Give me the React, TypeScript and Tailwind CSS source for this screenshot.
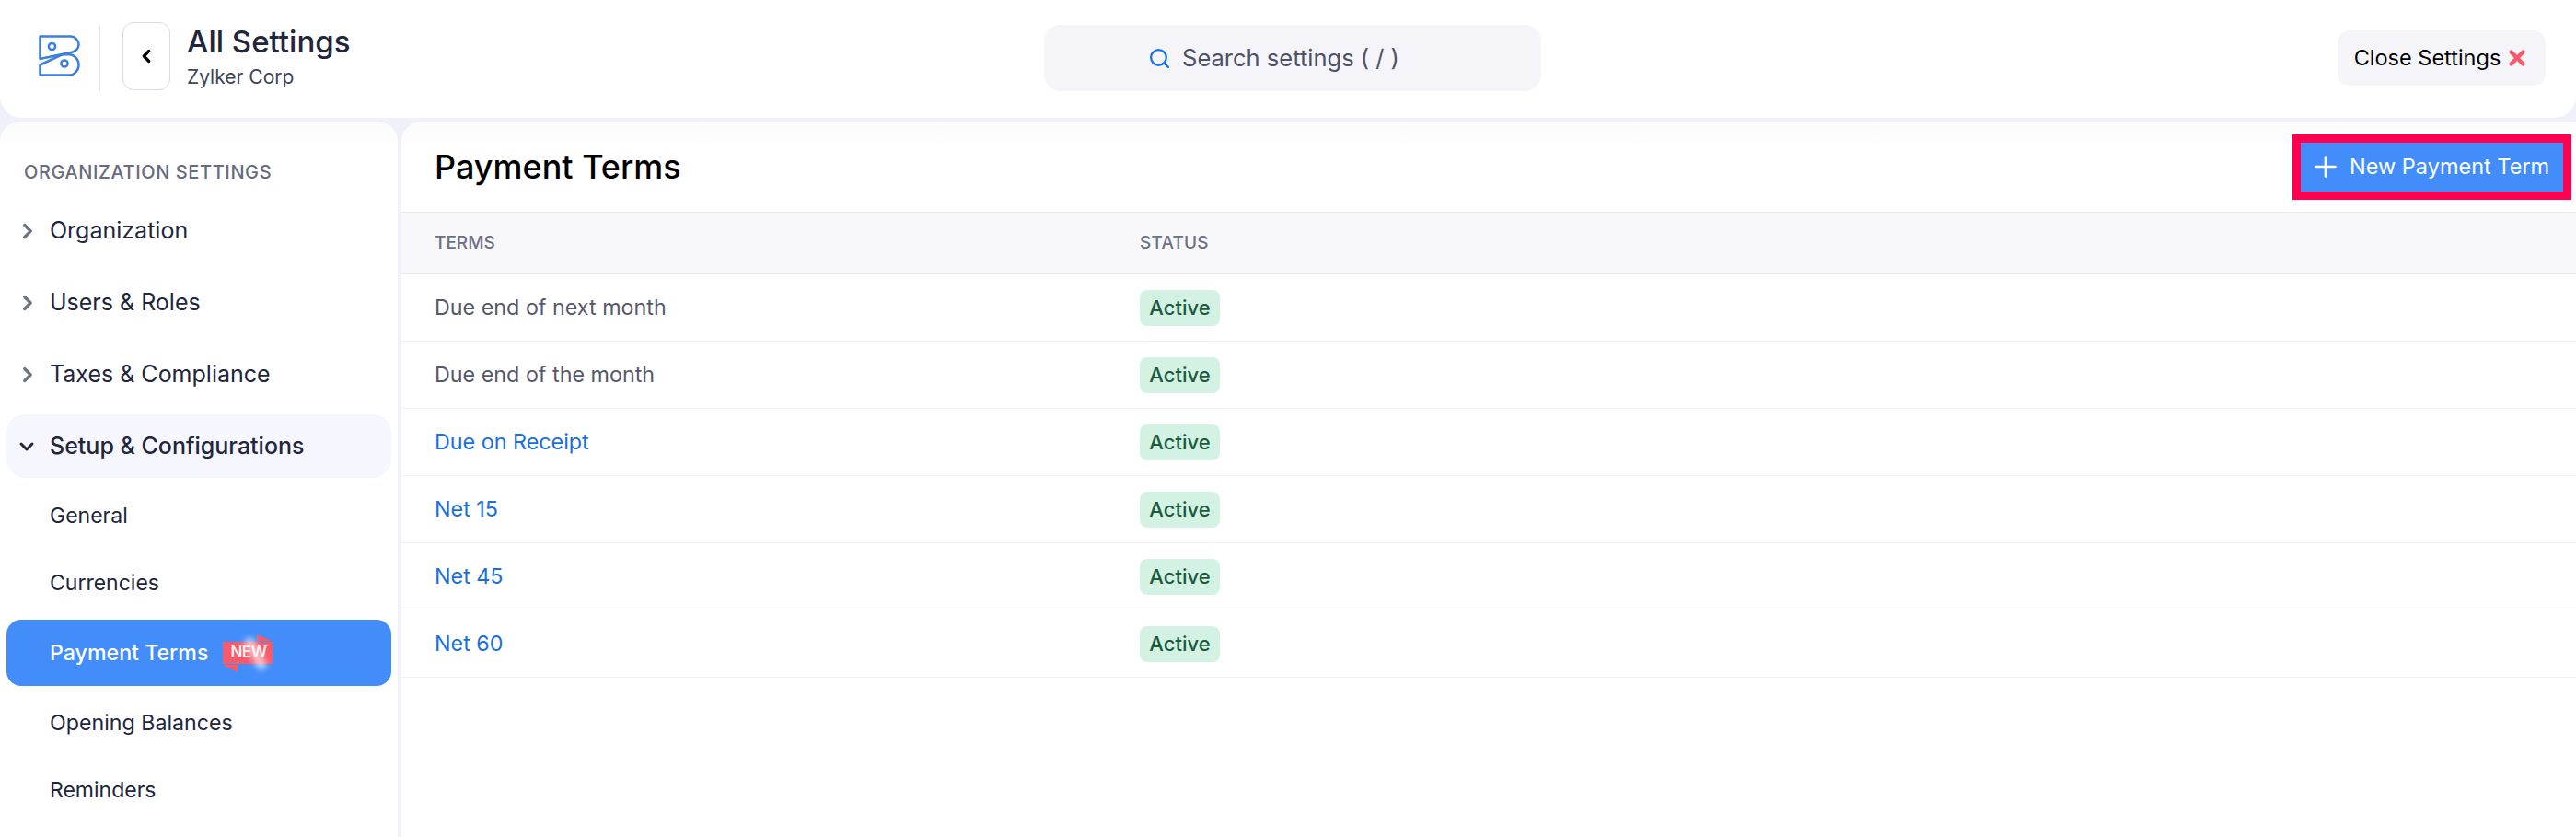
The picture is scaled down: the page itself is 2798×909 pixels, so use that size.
import { ChevronDown, ChevronLeft, ChevronRight, Plus, Search, X } from "lucide-react"

const topItems = ["Organization", "Users & Roles", "Taxes & Compliance"]

const terms = [
  { name: "Due end of next month", link: false },
  { name: "Due end of the month", link: false },
  { name: "Due on Receipt", link: true },
  { name: "Net 15", link: true },
  { name: "Net 45", link: true },
  { name: "Net 60", link: true },
]

function Logo() {
  return (
    <svg viewBox="0 0 45 45" className="-mt-[5px] w-[45px] h-[45px] shrink-0" fill="none" stroke="#3f7fdc" strokeWidth="2.5">
      <path d="M1.5 26V1.5H34C40 1.5 43.5 6 43.5 10.5C43.5 14 41 17 37 18.5L1.5 26Z" strokeLinejoin="round" />
      <path d="M1.5 32.5V43.5H33C39 43.5 43.5 38.5 43.5 32.5C43.5 26.5 39 21.5 33 21L25 21.5L1.5 32.5Z" strokeLinejoin="round" />
      <circle cx="14.5" cy="12.5" r="3.6" />
      <circle cx="28" cy="31" r="3.6" />
    </svg>
  )
}

function NewBadge() {
  return (
    <span className="relative ml-[16px] flex h-[24px] w-[54px] items-center pl-[8px] bg-[#f65a6b] text-[17px] font-semibold tracking-[-0.5px] text-white/90">
      NEW
      <svg viewBox="0 0 54 42" className="absolute left-0 top-[-8px] w-[54px] h-[42px]" fill="#f65a6b">
        <path d="M37 0L53 7H37Z" />
        <path d="M0 33H16V41Z" />
      </svg>
      <span className="absolute left-[30px] top-[-6px] h-[38px] w-[11px] -rotate-[28deg] rounded-full bg-white/60 blur-[3px]" />
    </span>
  )
}

export default function App() {
  return (
    <div className="h-screen overflow-hidden bg-[#eff0fa] font-['Inter',sans-serif] text-[#21263c]">
      <header className="flex h-[128px] items-center justify-between rounded-b-[24px] bg-white pb-[2px] pl-[42px] pr-[33px]">
        <div className="flex flex-1 items-center">
          <Logo />
          <div className="ml-[21px] h-[72px] w-px bg-[#e6e7ee]" />
          <button className="-mt-[4px] ml-[24px] flex h-[74px] w-[52px] items-center justify-center rounded-[12px] border border-[#d9dbe5] bg-white">
            <ChevronLeft className="h-[22px] w-[22px] text-black" strokeWidth={3.6} />
          </button>
          <div className="-mt-[3px] ml-[18px]">
            <div className="text-[33px] leading-[40px] font-medium">All Settings</div>
            <div className="mt-[5px] text-[21px] leading-[28px] text-[#3e4459]">Zylker Corp</div>
          </div>
        </div>
        <div className="flex h-[72px] w-[540px] items-center justify-center gap-[12px] rounded-[18px] bg-[#f4f4f9] pr-[40px] text-[25.5px] text-[#4b5265]">
          <Search className="h-[25px] w-[25px] text-[#1a73e8]" strokeWidth={2.2} />
          Search settings ( / )
        </div>
        <div className="flex flex-1 justify-end">
          <button className="flex h-[60px] w-[226px] items-center justify-center gap-[5px] rounded-[14px] bg-[#f4f4f9] text-[23.5px] text-black">
            Close Settings
            <X className="h-[26px] w-[26px] text-[#f65a6b]" strokeWidth={4} />
          </button>
        </div>
      </header>

      <div className="mt-[4px] flex h-[777px] gap-[4px]">
        <aside className="w-[432px] shrink-0 rounded-t-[22px] bg-white bg-gradient-to-b from-[#fbfbfd] to-white to-[30px] px-[7px]">
          <div className="pl-[19px] pt-[41px] pb-[15px] text-[20px] leading-[28px] font-medium tracking-[0.6px] text-[#666b80]">
            ORGANIZATION SETTINGS
          </div>
          {topItems.map((item) => (
            <div key={item} className="mb-[9px] flex h-[69px] items-center text-[25px]">
              <ChevronRight className="ml-[9.5px] h-[26px] w-[26px] text-[#6f7381]" strokeWidth={3} />
              <span className="ml-[11.5px]">{item}</span>
            </div>
          ))}
          <div className="flex h-[69px] items-center rounded-[20px] bg-[#f6f7fe] text-[25px] font-medium">
            <ChevronDown className="ml-[10px] h-[24px] w-[24px]" strokeWidth={3} />
            <span className="ml-[13px]">Setup &amp; Configurations</span>
          </div>
          <div className="mt-[5px] flex h-[72px] items-center pl-[47px] text-[23px]">General</div>
          <div className="mt-px flex h-[72px] items-center pl-[47px] text-[23px]">Currencies</div>
          <div className="mt-[4px] flex h-[72px] items-center rounded-[16px] bg-[#428df9] pl-[47px] text-[23.2px] font-medium text-white">
            Payment Terms
            <NewBadge />
          </div>
          <div className="mt-[4px] flex h-[72px] items-center pl-[47px] text-[23.2px]">Opening Balances</div>
          <div className="mt-px flex h-[72px] items-center pl-[47px] text-[23px]">Reminders</div>
        </aside>

        <main className="flex-1 rounded-tl-[22px] bg-white bg-gradient-to-b from-[#fbfbfd] to-white to-[30px]">
          <div className="flex h-[99px] items-center justify-between border-b border-[#e8e9ef] pl-[36px] pr-[5px]">
            <h1 className="text-[36px] font-medium text-black">Payment Terms</h1>
            <button className="flex h-[71px] w-[303px] items-center gap-[8px] border-[9px] border-[#ff0050] bg-[#428df9] pl-[9px] text-[23.5px] text-white">
              <Plus className="h-[36px] w-[36px]" strokeWidth={1.8} />
              New Payment Term
            </button>
          </div>
          <div className="flex h-[67px] items-center border-b border-[#e8e9f2] bg-[#f8f8fb] pl-[36px] text-[19px] font-medium text-[#6b7083]">
            <div className="w-[766px]">TERMS</div>
            <div className="tracking-[0.2px]">STATUS</div>
          </div>
          {terms.map((term) => (
            <div key={term.name} className="flex h-[73px] items-center border-b border-[#eceef5] pl-[36px] text-[23.3px]">
              <div className={term.link ? "w-[766px] text-[#1a6fe0]" : "w-[766px] text-[#565a68]"}>{term.name}</div>
              <span className="flex h-[39px] w-[87px] items-center justify-center rounded-[8px] bg-[#d3f2e4] text-[22px] font-medium text-[#1c5a3c]">
                Active
              </span>
            </div>
          ))}
        </main>
      </div>
    </div>
  )
}
